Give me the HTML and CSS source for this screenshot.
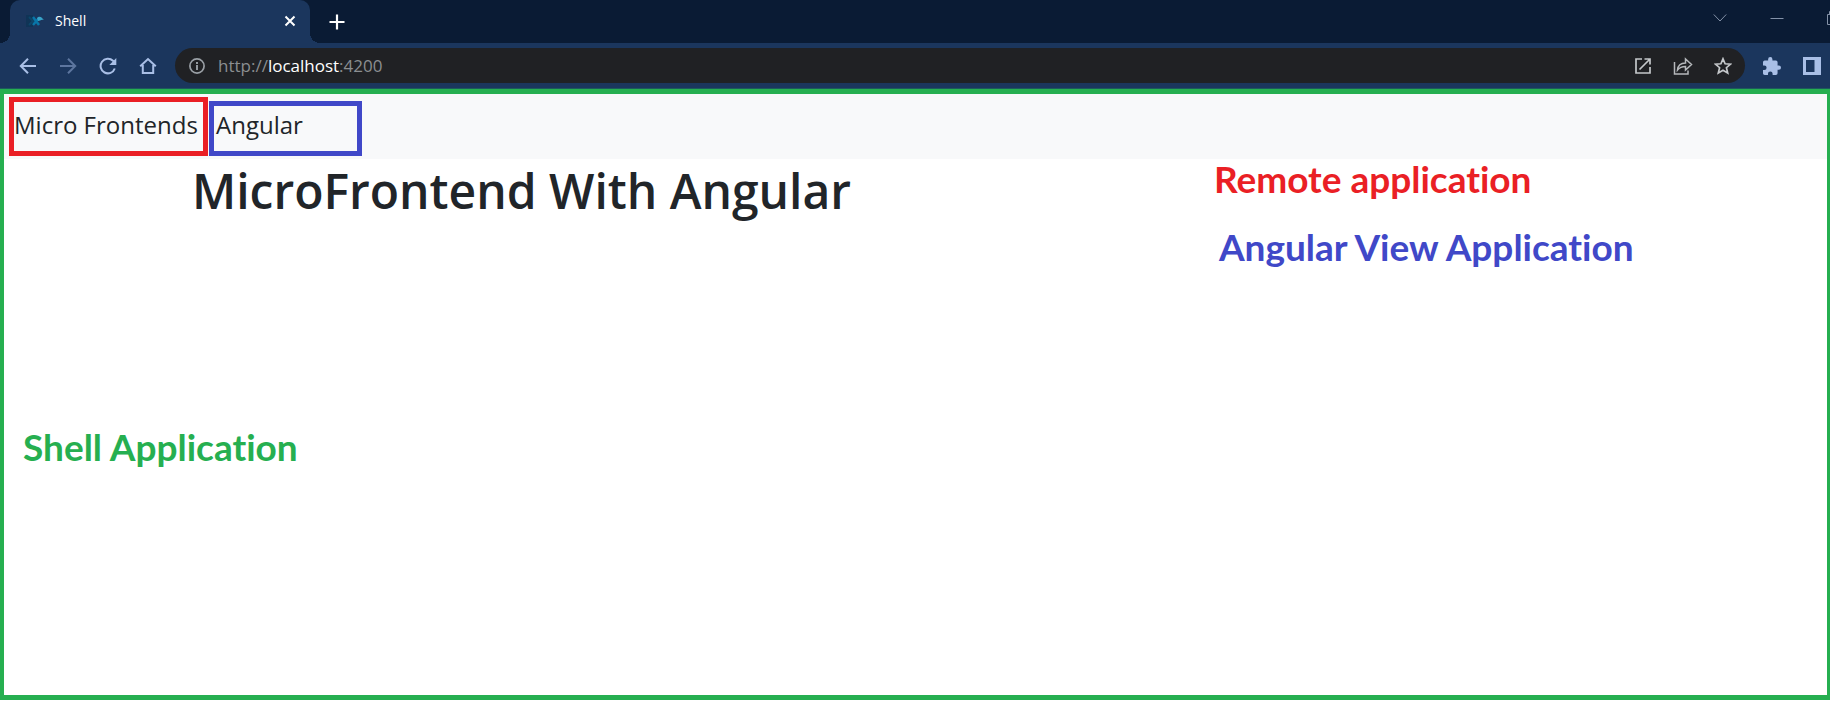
FILE: index.html
```html
<!DOCTYPE html>
<html lang="en">
<head>
<meta charset="utf-8">
<title>Shell</title>
<link rel="stylesheet" href="styles.css">
</head>
<body>
<header class="browser">
  <div class="tab-strip">
    <div class="tab">
      <svg class="favicon" width="18" height="12" viewBox="0 0 18 12"><path d="M0 0h7v12H0z" fill="#103456"/><path d="M3 2l4 4-4 4" fill="none" stroke="#0d4669" stroke-width="2"/><path d="M7 2l6 8M13 3l-6 7" stroke="#0876a8" stroke-width="2.5"/><path d="M11 3c3-3 5 0 7 2-3-1-4 1-6 1z" fill="#38a3c8"/></svg>
      <span class="tab-title">Shell</span>
      <button class="icon-button" aria-label="Close tab"><svg width="12" height="12" viewBox="0 0 12 12"><path d="M1.5 1.5l9 9m0-9l-9 9" stroke="#fff" stroke-width="2"/></svg></button>
    </div>
    <button class="icon-button new-tab" aria-label="New tab"><svg width="16" height="16" viewBox="0 0 16 16"><path d="M8 .5v15M.5 8h15" stroke="#fff" stroke-width="2.2"/></svg></button>
    <div class="window-controls">
      <button class="icon-button" aria-label="Search tabs"><svg width="14" height="14" viewBox="0 0 14 14"><path d="M.8 3.5L7 10l6.200-6.500" fill="none" stroke="#8492a8"/></svg></button>
      <button class="icon-button" aria-label="Minimize"><svg width="14" height="14" viewBox="0 0 14 14"><path d="M.5 7.500h13" stroke="#8492a8"/></svg></button>
      <button class="icon-button" aria-label="Restore"><svg width="3" height="14" viewBox="0 0 3 14"><path d="M3 3.500H.5v10H3M2.500 3.500V.5H3" fill="none" stroke="#8492a8"/></svg></button>
    </div>
  </div>
  <div class="toolbar">
    <nav class="history" aria-label="Browser">
      <button class="icon-button" aria-label="Back"><svg width="18" height="18" viewBox="0 0 18 18"><path d="M17 9H2M9 1.800L1.800 9 9 16.200" fill="none" stroke="#a9bfe6" stroke-width="2"/></svg></button>
      <button class="icon-button" aria-label="Forward"><svg width="18" height="18" viewBox="0 0 18 18"><path d="M1 9h15M9 1.800L16.200 9 9 16.200" fill="none" stroke="#5d769f" stroke-width="2"/></svg></button>
      <button class="icon-button" aria-label="Reload"><svg width="18" height="18" viewBox="0 0 18 18"><path d="M15.800 11.500A7.300 7.300 0 1 1 14 3.800l2 2" fill="none" stroke="#a9bfe6" stroke-width="2"/><path d="M17.300 1v7h-7z" fill="#a9bfe6"/></svg></button>
      <button class="icon-button" aria-label="Home"><svg width="18" height="18" viewBox="0 0 18 18"><path d="M1.200 9.300L9 2l7.800 7.300M3.800 8v8h10.400V8" fill="none" stroke="#a9bfe6" stroke-width="2"/></svg></button>
    </nav>
    <div class="address">
      <svg width="16" height="16" viewBox="0 0 16 16"><circle cx="8" cy="8" r="7.100" fill="none" stroke="#9aa0a6" stroke-width="1.700"/><path d="M8 7v5M8 4v2" stroke="#9aa0a6" stroke-width="1.900"/></svg>
      <span class="url">http://<b>localhost</b>:4200</span>
      <div class="page-actions">
        <button class="icon-button" aria-label="Open in app"><svg width="18" height="18" viewBox="0 0 18 18"><path d="M8 2H2v14h14v-6M5.500 12.500L15.500 2.500M10.500 2H16v5.500" fill="none" stroke="#c4c7ca" stroke-width="1.700"/></svg></button>
        <button class="icon-button" aria-label="Share"><svg width="20" height="18" viewBox="0 0 20 18"><path d="M1.500 5v12H15v-3.500M4.500 13c.5-5 3.500-7 8-7V2l6 5.500-6 5.500V9.500c-4 0-6 1-8 3.500z" fill="none" stroke="#b5b8bb" stroke-width="1.500"/></svg></button>
        <button class="icon-button" aria-label="Bookmark"><svg width="18" height="18" viewBox="0 0 18 18"><path d="M9 1.800l2.100 5 5.400.4-4.100 3.500 1.300 5.300L9 13.200 4.300 16l1.300-5.300-4.100-3.500 5.400-.4z" fill="none" stroke="#c4c7ca" stroke-width="1.700"/></svg></button>
      </div>
    </div>
    <div class="extensions">
      <button class="icon-button" aria-label="Extensions"><svg width="18" height="18" viewBox="2 1 21 21"><path fill="#a9bfe6" d="M20.500 11H19V7a2 2 0 0 0-2-2h-4V3.500a2.500 2.500 0 0 0-5 0V5H4a2 2 0 0 0-2 2v3.800h1.500a2.700 2.700 0 0 1 0 5.400H2V20c0 1.100.9 2 2 2h3.800v-1.500a2.700 2.700 0 0 1 5.400 0V22H17a2 2 0 0 0 2-2v-4h1.500a2.500 2.500 0 0 0 0-5z"/></svg></button>
      <button class="icon-button" aria-label="Side panel"><svg width="18" height="18" viewBox="0 0 18 18"><path fill="#a9bfe6" fill-rule="evenodd" d="M0 0h18v18H0zM3 3v12h8.500V3z"/></svg></button>
    </div>
  </div>
</header>
<main class="shell">
  <nav class="navbar" aria-label="Main">
    <a class="nav-box remote" href="#micro">Micro Frontends</a>
    <a class="nav-box view" href="#angular">Angular</a>
  </nav>
  <div class="content">
    <h1 class="title">MicroFrontend With Angular</h1>
    <div class="legend">
      <p class="label remote">Remote application</p>
      <p class="label view">Angular View Application</p>
    </div>
  </div>
  <p class="label shell-label">Shell Application</p>
</main>
</body>
</html>
```
FILE: styles.css
```css
* {
  box-sizing: border-box;
}

body {
  display: flex;
  flex-direction: column;
  min-height: 100vh;
  margin: 0;
  padding-bottom: 7px;
  background: #fff;
  color: #212529;
  font-family: "Open Sans", "Noto Sans", sans-serif;
}

h1,
p {
  margin: 0;
}

svg {
  display: block;
}

.icon-button {
  display: flex;
  padding: 0;
  border: 0;
  background: none;
}

.browser {
  background: #1b365d;
  border-bottom: 1px solid #1d5a5c;
}

.tab-strip {
  display: flex;
  align-items: stretch;
  height: 43px;
  padding-left: 10px;
  background: #0a1b34;
}

.tab {
  position: relative;
  display: flex;
  align-items: center;
  gap: 11px;
  width: 300px;
  padding: 0 14px 2px 16px;
  border-radius: 10px 10px 0 0;
  background: #1b365d;
}

.tab::before,
.tab::after {
  content: "";
  position: absolute;
  bottom: 0;
  width: 10px;
  height: 10px;
}

.tab::before {
  right: 100%;
  background: radial-gradient(circle at 0 0, transparent 10px, #1b365d 10px);
}

.tab::after {
  left: 100%;
  background: radial-gradient(circle at 100% 0, transparent 10px, #1b365d 10px);
}

.tab-title {
  flex: 1;
  color: #fff;
  font-size: 14px;
}

.new-tab {
  align-items: center;
  margin-left: 19px;
}

.window-controls {
  display: flex;
  gap: 43px;
  margin-left: auto;
  padding-top: 11px;
}

.window-controls .icon-button {
  align-items: flex-start;
}

.toolbar {
  display: flex;
  align-items: center;
  height: 45px;
  padding: 0 9px 0 19px;
}

.history {
  display: flex;
  gap: 22px;
}

.address {
  display: flex;
  flex: 1;
  align-items: center;
  gap: 13px;
  height: 35px;
  margin: 0 18px;
  padding: 0 13px 0 14px;
  border-radius: 18px;
  background: #202124;
}

.url {
  color: #8b8e91;
  font-size: 17px;
}

.url b {
  color: #fff;
  font-weight: 400;
}

.page-actions {
  display: flex;
  gap: 21px;
  margin-left: auto;
}

.extensions {
  display: flex;
  gap: 22px;
}

.shell {
  flex: 1;
  border: solid #26af50;
  border-width: 5px 3px 5px 4px;
}

.navbar {
  display: flex;
  align-items: flex-end;
  gap: 1px;
  padding: 3px 5px;
  background: #f8f9fa;
}

.nav-box {
  border: 5px solid;
  color: #212529;
  font-size: 24px;
  line-height: 32px;
  text-decoration: none;
}

.nav-box.remote {
  width: 199px;
  padding: 7px 0 10px;
  border-color: #ea1f25;
  white-space: nowrap;
}

.nav-box.view {
  width: 153px;
  padding: 3px 2px 10px;
  border-color: #4048c8;
}

.content {
  display: grid;
  grid-template-columns: 5fr 3fr;
  padding-left: 188px;
}

.title {
  font-size: 48px;
  font-weight: 600;
  line-height: 64px;
}

.label {
  font-family: Lato, sans-serif;
  font-size: 37px;
  font-weight: 700;
  line-height: 40px;
  font-variant-ligatures: none;
}

.legend {
  display: flex;
  flex-direction: column;
  gap: 28px;
}

.label.remote {
  color: #ea1f25;
}

.label.view {
  padding-left: 5px;
  color: #4048c8;
}

.shell-label {
  padding: 160px 0 0 19px;
  color: #26af50;
}
```
